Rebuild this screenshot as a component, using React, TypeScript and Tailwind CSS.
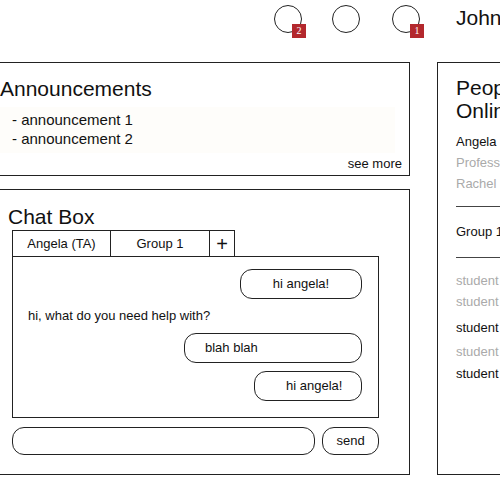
import React from 'react';

const Bell = ({ badge }: { badge?: string }) => (
  <div className="relative w-[28px] h-[28px]">
    <div className="w-[28px] h-[28px] rounded-full border border-[#222]" />
    {badge && (
      <span className="absolute left-[18px] top-[19px] w-[14px] h-[14px] bg-[#b3282d] text-white text-[10px] leading-[14px] text-center font-['Liberation_Serif',serif]">
        {badge}
      </span>
    )}
  </div>
);

const Bubble = ({ text, width, className = '' }: { text: string; width: string; className?: string }) => (
  <div className={`self-end h-[30px] border border-[#222] rounded-[12px] flex items-center text-[13px] ${width} ${className}`}>
    {text}
  </div>
);

export default function App() {
  const people = [
    { name: 'Angela', dim: false },
    { name: 'Professor', dim: true },
    { name: 'Rachel', dim: true },
  ];
  const students = [
    { name: 'student', dim: true, mt: 'mt-[15px]' },
    { name: 'student', dim: true, mt: 'mt-[5px]' },
    { name: 'student', dim: false, mt: 'mt-[10px]' },
    { name: 'student', dim: true, mt: 'mt-[8px]' },
    { name: 'student', dim: false, mt: 'mt-[6px]' },
  ];

  return (
    <div className="w-[500px] h-[500px] overflow-hidden bg-white text-[#111] font-['Liberation_Sans',Arial,sans-serif]">
      <header className="h-[62px] flex items-start pt-[5px] pl-[274px]">
        <Bell badge="2" />
        <div className="ml-[30px]"><Bell /></div>
        <div className="ml-[32px]"><Bell badge="1" /></div>
        <span className="ml-[36px] mt-[1px] text-[21px] font-light leading-[24px]">John</span>
      </header>

      <main className="flex items-start">
        <div className="ml-[-10px] w-[420px] flex flex-col gap-[13px]">
          <section className="h-[114px] border border-[#222] flex flex-col pl-[9px] pr-[7px]">
            <h2 className="mt-[14px] text-[21px] leading-[24px] font-light">Announcements</h2>
            <ul className="mt-[6px] mr-[7px] h-[46px] bg-[#fefdfa] pl-[12px] pt-[3px] text-[15px] leading-[19px]">
              <li>- announcement 1</li>
              <li>- announcement 2</li>
            </ul>
            <div className="mt-auto mb-[3px] self-end text-[13px] leading-[16px]">see more</div>
          </section>

          <section className="h-[286px] border border-[#222] pl-[21px] pr-[30px]">
            <h2 className="mt-[15px] ml-[-4px] text-[21px] leading-[24px] font-light">Chat Box</h2>
            <div className="mt-[1px] flex text-[13px]">
              <div className="w-[99px] h-[26px] border border-[#222] border-b-0 flex items-center justify-center">Angela (TA)</div>
              <div className="w-[99px] h-[26px] border border-[#222] border-l-0 border-b-0 flex items-center justify-center">Group 1</div>
              <div className="w-[25px] h-[26px] border border-[#222] border-l-0 border-b-0 flex items-center justify-center text-[20px] font-light">+</div>
            </div>
            <div className="h-[162px] border border-[#222] flex flex-col pr-[16px] pt-[12px]">
              <Bubble text="hi angela!" width="w-[122px]" className="justify-center" />
              <div className="mt-[9px] ml-[15px] h-[16px] text-[13px] leading-[16px]">hi, what do you need help with?</div>
              <Bubble text="blah blah" width="w-[178px]" className="mt-[9px] pl-[20px]" />
              <Bubble text="hi angela!" width="w-[108px]" className="mt-[8px] pl-[31px]" />
            </div>
            <div className="mt-[9px] flex gap-[7px]">
              <div className="w-[305px] h-[28px] border border-[#222] rounded-[12px]" />
              <div className="w-[57px] h-[28px] border border-[#222] rounded-[12px] flex items-center justify-center text-[13px]">send</div>
            </div>
          </section>
        </div>

        <aside className="ml-[27px] w-[100px] h-[413px] border border-[#222] pl-[18px] shrink-0">
          <h2 className="mt-[13px] text-[21px] leading-[23px] font-light">People Online</h2>
          <ul className="mt-[12px] text-[13px] leading-[16px]">
            {people.map((p, i) => (
              <li key={p.name} className={`${i ? 'mt-[5px]' : ''} ${p.dim ? 'text-[#aaa]' : ''}`}>{p.name}</li>
            ))}
          </ul>
          <div className="mt-[14px] border-t border-[#444]" />
          <div className="mt-[17px] text-[13px] leading-[16px]">Group 1</div>
          <div className="mt-[17px] border-t border-[#444]" />
          <ul className="text-[13px] leading-[16px]">
            {students.map((s, i) => (
              <li key={i} className={`${s.mt} ${s.dim ? 'text-[#aaa]' : ''}`}>{s.name}</li>
            ))}
          </ul>
        </aside>
      </main>
    </div>
  );
}
